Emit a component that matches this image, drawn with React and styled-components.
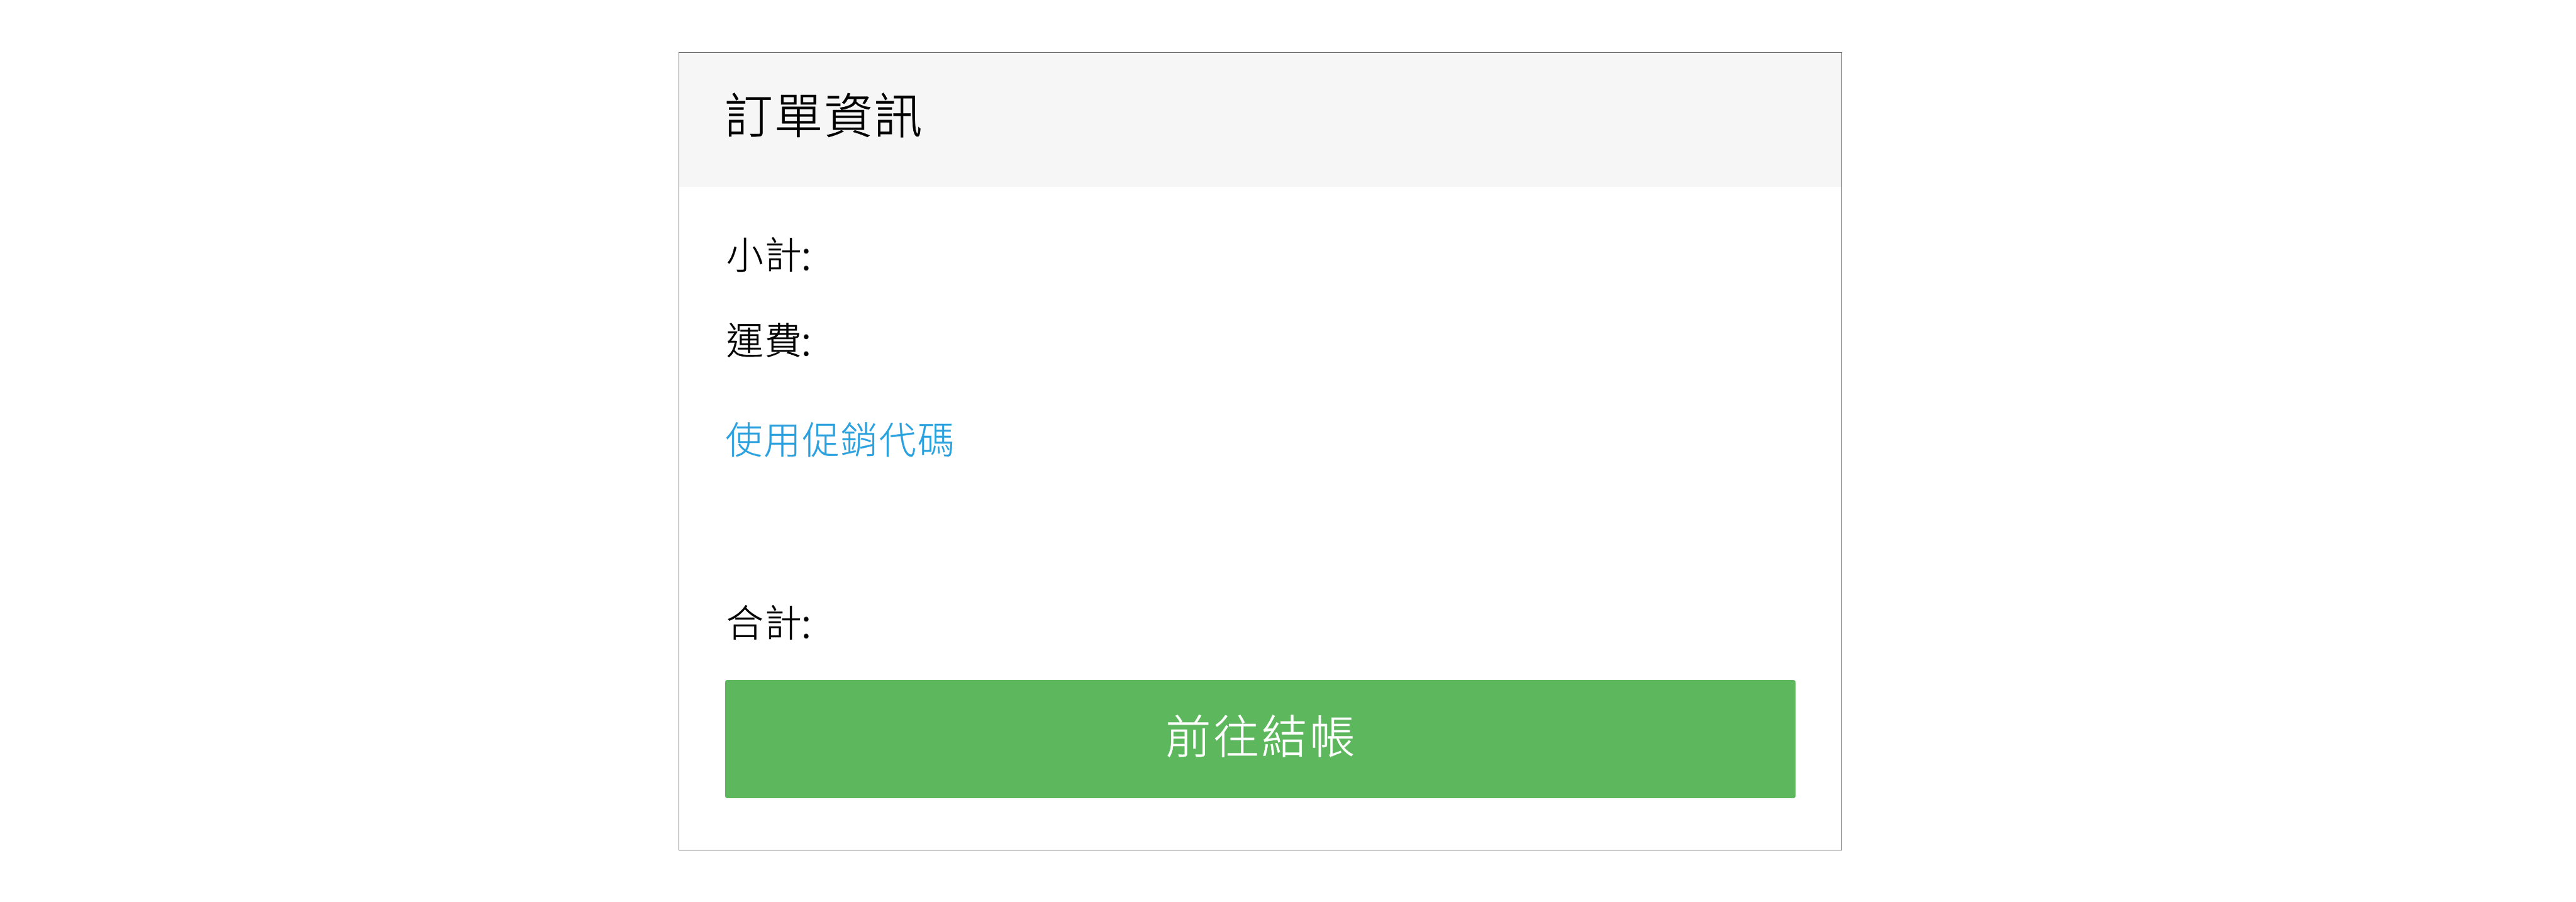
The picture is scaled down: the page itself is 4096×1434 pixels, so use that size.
import React from "react";
import styled, { createGlobalStyle } from "styled-components";

const GlobalStyle = createGlobalStyle`
  body {
    margin: 0;
    background: #fff;
    font-family: "Noto Sans CJK TC", "Noto Sans", sans-serif;
    font-weight: 300;
    -webkit-text-stroke: 0.6px #000;
  }
`;

const Page = styled.main`
  box-sizing: border-box;
  height: 1434px;
  padding: 83px 0 0 1079px;
`;

const Card = styled.section`
  box-sizing: border-box;
  width: 1850px;
  height: 1269px;
  border: 1px solid #6c6c6c;
`;

const Header = styled.header`
  box-sizing: border-box;
  height: 213px;
  padding: 45px 72px 0;
  background: #f6f6f6;
`;

const Title = styled.h2`
  margin: 0;
  font-size: 76.6px;
  font-weight: inherit;
  line-height: 100px;
  letter-spacing: 2.6px;
  color: #000;
  -webkit-text-stroke-width: 0.8px;
`;

const Body = styled.div`
  display: flex;
  flex-direction: column;
  align-items: stretch;
  padding: 65px 73px 0;
`;

const Row = styled.div`
  margin-top: ${(p) => p.$gap || 0}px;
  padding-left: 2px;
  font-size: 58.7px;
  line-height: 80px;
  letter-spacing: 2.3px;
  color: #000;
`;

const Colon = styled.span`
  margin-left: -3.2px;
  font-size: 65.5px;
  line-height: 0;
  vertical-align: -1.7px;
`;

const PromoLink = styled.a`
  align-self: flex-start;
  margin-top: 78px;
  padding-left: 0.5px;
  font-size: 58.7px;
  line-height: 80px;
  letter-spacing: 2.4px;
  color: #2aa1df;
  -webkit-text-stroke: 0.4px #2aa1df;
`;

const CheckoutButton = styled.button`
  box-sizing: border-box;
  height: 188px;
  margin-top: 54px;
  padding: 0 0 19px 4px;
  border: 0;
  border-radius: 4px;
  background: #5db75d;
  color: #fff;
  font: inherit;
  font-size: 72px;
  line-height: 100px;
  letter-spacing: 4.4px;
  -webkit-text-stroke: 0.5px #fff;
`;

export default function App() {
  return (
    <>
      <GlobalStyle />
      <Page>
        <Card>
          <Header>
            <Title>訂單資訊</Title>
          </Header>
          <Body>
            <Row>小計<Colon>:</Colon></Row>
            <Row $gap={56}>運費<Colon>:</Colon></Row>
            <PromoLink>使用促銷代碼</PromoLink>
            <Row $gap={211}>合計<Colon>:</Colon></Row>
            <CheckoutButton type="button">前往結帳</CheckoutButton>
          </Body>
        </Card>
      </Page>
    </>
  );
}
